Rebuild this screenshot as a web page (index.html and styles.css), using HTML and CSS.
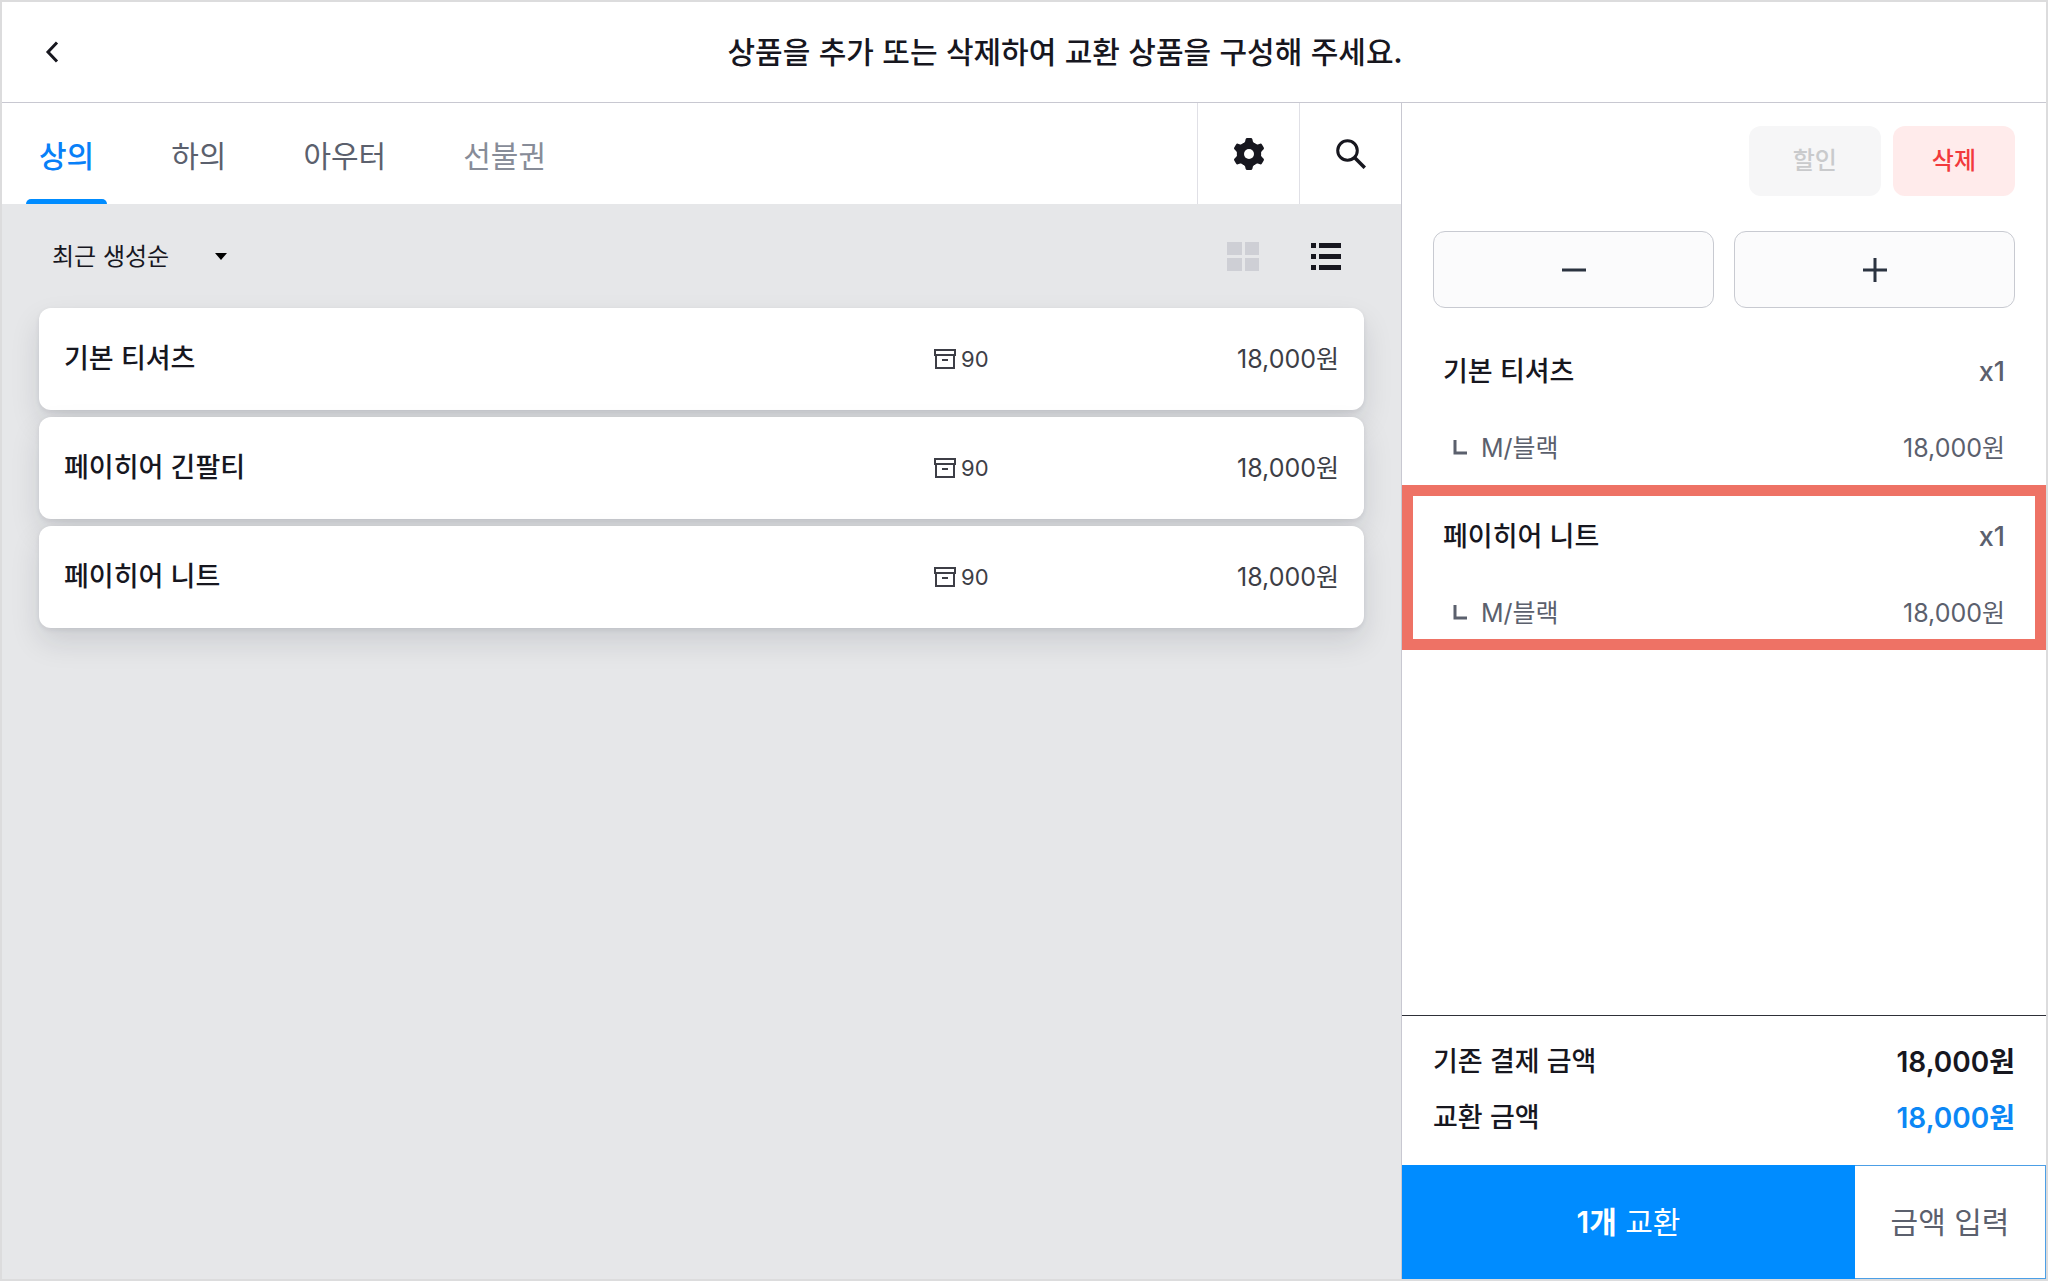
FILE: index.html
```html
<!DOCTYPE html>
<html lang="ko">
<head>
    <meta charset="UTF-8">
    <meta name="viewport" content="width=device-width, initial-scale=1.0">
    <title>상품 교환</title>
    <link rel="stylesheet" href="styles.css">
</head>
<body>
    <svg class="defs" aria-hidden="true">
        <symbol id="icon-box" viewBox="0 0 22 20">
            <path d="M1 1h20v5H1zM2 6v13h18V6M8 11h6" fill="none" stroke="currentColor" stroke-width="2"/>
        </symbol>
        <symbol id="icon-branch" viewBox="0 0 14 16">
            <path d="M2 0v13h12" fill="none" stroke="currentColor" stroke-width="3"/>
        </symbol>
        <path id="gear-tooth" d="M12.6 1.3Q12.9 0 14.2 0h3.6q1.3 0 1.6 1.3l.5 2.3q.6 1.6 2.4 2L16 16 9.700 5.600q1.800-.4 2.400-2z"/>
    </svg>

    <header class="header">
        <button class="back-btn" aria-label="뒤로">
            <svg width="14" height="22" viewBox="0 0 14 22"><path d="M12 1.500 3 11l9 9.500" fill="none" stroke="currentColor" stroke-width="3"/></svg>
        </button>
        <h1>상품을 추가 또는 삭제하여 교환 상품을 구성해 주세요.</h1>
    </header>

    <div class="content">
        <main class="products">
            <div class="toolbar">
                <nav class="tabs">
                    <a href="#top" class="tab active">상의</a>
                    <a href="#bottom" class="tab">하의</a>
                    <a href="#outer" class="tab">아우터</a>
                    <a href="#prepaid" class="tab light">선불권</a>
                </nav>
                <button class="tool-btn" aria-label="설정">
                    <svg width="32" height="32" viewBox="0 0 32 32" fill="currentColor">
                        <use href="#gear-tooth"/>
                        <use href="#gear-tooth" transform="rotate(60 16 16)"/>
                        <use href="#gear-tooth" transform="rotate(120 16 16)"/>
                        <use href="#gear-tooth" transform="rotate(180 16 16)"/>
                        <use href="#gear-tooth" transform="rotate(240 16 16)"/>
                        <use href="#gear-tooth" transform="rotate(300 16 16)"/>
                        <circle cx="16" cy="16" r="12"/>
                        <circle cx="16" cy="16" r="5" fill="#fff"/>
                    </svg>
                </button>
                <button class="tool-btn" aria-label="검색">
                    <svg width="30" height="30" viewBox="0 0 30 30" fill="none" stroke="currentColor" stroke-width="3">
                        <circle cx="11.500" cy="11.500" r="9.800"/>
                        <path d="M18.500 18.500 28.800 28.800" stroke-width="3.500"/>
                    </svg>
                </button>
            </div>

            <div class="options">
                <div class="sort">
                    <select aria-label="정렬">
                        <option>최근 생성순</option>
                        <option>이름순</option>
                    </select>
                    <svg class="caret" width="12" height="7" viewBox="0 0 12 7"><path d="M0 0h12L6 7z"/></svg>
                </div>
                <div class="views">
                    <button class="view-btn" aria-label="격자 보기">
                        <svg width="32" height="29" viewBox="0 0 32 29" fill="currentColor"><path d="M0 0h15v13H0zM18 0h14v13H18zM0 16h15v13H0zM18 16h14v13H18z"/></svg>
                    </button>
                    <button class="view-btn active" aria-label="목록 보기">
                        <svg width="30" height="28" viewBox="0 0 30 28" fill="currentColor"><path d="M0 0h5v5H0zM8 0h22v5H8zM0 11h5v5H0zM8 11h22v5H8zM0 22h5v5H0zM8 22h22v5H8z"/></svg>
                    </button>
                </div>
            </div>

            <ul class="product-list">
                <li>
                    <button class="product">
                        <span class="name">기본 티셔츠</span>
                        <span class="stock"><svg width="22" height="20"><use href="#icon-box"/></svg>90</span>
                        <span class="price">18,000원</span>
                    </button>
                </li>
                <li>
                    <button class="product">
                        <span class="name">페이히어 긴팔티</span>
                        <span class="stock"><svg width="22" height="20"><use href="#icon-box"/></svg>90</span>
                        <span class="price">18,000원</span>
                    </button>
                </li>
                <li>
                    <button class="product">
                        <span class="name">페이히어 니트</span>
                        <span class="stock"><svg width="22" height="20"><use href="#icon-box"/></svg>90</span>
                        <span class="price">18,000원</span>
                    </button>
                </li>
            </ul>
        </main>

        <aside class="cart">
            <div class="cart-actions">
                <button class="action" disabled>할인</button>
                <button class="action delete">삭제</button>
            </div>
            <div class="quantity">
                <button class="qty-btn" aria-label="수량 감소">
                    <svg width="24" height="24" viewBox="0 0 24 24"><path d="M0 12h24" stroke="currentColor" stroke-width="3"/></svg>
                </button>
                <button class="qty-btn" aria-label="수량 증가">
                    <svg width="24" height="24" viewBox="0 0 24 24"><path d="M0 12h24M12 0v24" stroke="currentColor" stroke-width="3"/></svg>
                </button>
            </div>

            <ul class="cart-list">
                <li class="cart-item">
                    <div class="cart-row">
                        <span class="name">기본 티셔츠</span>
                        <span class="count">x1</span>
                    </div>
                    <div class="cart-row option">
                        <span class="variant"><svg width="14" height="16"><use href="#icon-branch"/></svg>M/블랙</span>
                        <span class="price">18,000원</span>
                    </div>
                </li>
                <li class="cart-item selected">
                    <div class="cart-row">
                        <span class="name">페이히어 니트</span>
                        <span class="count">x1</span>
                    </div>
                    <div class="cart-row option">
                        <span class="variant"><svg width="14" height="16"><use href="#icon-branch"/></svg>M/블랙</span>
                        <span class="price">18,000원</span>
                    </div>
                </li>
            </ul>

            <dl class="totals">
                <div class="total">
                    <dt>기존 결제 금액</dt>
                    <dd>18,000원</dd>
                </div>
                <div class="total">
                    <dt>교환 금액</dt>
                    <dd class="blue">18,000원</dd>
                </div>
            </dl>
            <div class="footer">
                <button class="exchange-btn"><b>1개</b> 교환</button>
                <button class="amount-btn">금액 입력</button>
            </div>
        </aside>
    </div>
</body>
</html>
```
FILE: styles.css
```css
* {
    box-sizing: border-box;
}
body {
    margin: 0;
    min-height: 100vh;
    display: flex;
    flex-direction: column;
    border: 2px solid #dcdcdd;
    background-color: #fff;
    color: #17171f;
    font-family: Inter, "Noto Sans CJK KR", sans-serif;
    font-size: 27px;
    line-height: 40px;
}
button, select {
    margin: 0;
    padding: 0;
    border: none;
    background: none;
    color: inherit;
    font: inherit;
    cursor: pointer;
}
svg {
    display: block;
    flex-shrink: 0;
}
ul, dl, dd {
    margin: 0;
    padding: 0;
    list-style: none;
}
.defs {
    position: absolute;
    width: 0;
    height: 0;
}

/* header */
.header {
    display: flex;
    height: 101px;
    border-bottom: 1px solid #c8c8d1;
}
.back-btn {
    display: flex;
    width: 82px;
    align-items: center;
    padding-left: 43px;
}
h1 {
    flex: 1;
    margin: 0;
    padding-bottom: 4px;
    align-self: center;
    text-align: center;
    font-family: "Noto Sans CJK KR", sans-serif;
    font-size: 30px;
    font-weight: 500;
}
.content {
    flex: 1;
    display: flex;
}

/* products */
.products {
    flex: 1;
    background-color: #e6e7e9;
}
.toolbar {
    display: flex;
    height: 101px;
    background-color: #fff;
}
.tabs {
    flex: 1;
    display: flex;
    gap: 51px;
    padding-left: 24px;
}
.tab {
    display: flex;
    align-items: center;
    padding: 0 13px;
    border-top: 5px solid transparent;
    color: #5b606d;
    font-size: 30px;
    text-decoration: none;
}
.tab.light {
    color: #878c98;
}
.tab.active {
    position: relative;
    color: #0880f8;
    font-weight: 500;
}
.tab.active::after {
    content: "";
    position: absolute;
    left: 0;
    right: 0;
    bottom: 0;
    height: 5px;
    border-radius: 5px 5px 0 0;
    background-color: #008cff;
}
.tool-btn {
    display: flex;
    width: 102px;
    align-items: center;
    justify-content: center;
    padding-top: 1px;
    border-left: 1px solid #e0e0e6;
}
.options {
    display: flex;
    align-items: center;
    justify-content: space-between;
    height: 104px;
    padding: 1px 60px 0 50px;
}
.sort {
    display: flex;
    align-items: center;
}
.sort select {
    width: 175px;
    appearance: none;
    font-size: 24px;
}
.caret {
    margin-left: -12px;
    pointer-events: none;
}
.views {
    display: flex;
    gap: 52px;
}
.view-btn {
    color: #cecfd5;
}
.view-btn.active {
    color: #17171f;
}
.product-list {
    display: flex;
    flex-direction: column;
    gap: 7px;
    padding: 0 37px;
}
.name {
    font-weight: 500;
}
.product {
    display: grid;
    grid-template-columns: 1fr 150px 255px;
    align-items: center;
    width: 100%;
    height: 102px;
    padding: 0 25px;
    border-radius: 12px;
    background-color: #fff;
    box-shadow: 0 14px 30px rgba(20, 25, 45, 0.12), 0 2px 5px rgba(20, 25, 45, 0.08);
    text-align: left;
}
.product .stock {
    display: flex;
    align-items: center;
    gap: 5px;
    color: #3d3e46;
    font-size: 22px;
}
.product .price {
    color: #3d3e46;
    font-size: 25px;
    text-align: right;
}

/* cart */
.cart {
    display: flex;
    flex-direction: column;
    width: 645px;
    border-left: 1px solid #c8c8d1;
}
.cart-actions {
    display: flex;
    justify-content: flex-end;
    gap: 12px;
    padding: 23px 31px 35px;
}
.action {
    height: 70px;
    padding: 0 44px;
    border-radius: 12px;
    background-color: #f6f6f7;
    color: #c9cacc;
    font-size: 24px;
    font-weight: 500;
}
.action.delete {
    padding: 0 39px;
    background-color: #ffebeb;
    color: #f23a3c;
}
.quantity {
    display: flex;
    gap: 20px;
    padding: 0 31px;
}
.qty-btn {
    flex: 1;
    display: flex;
    align-items: center;
    justify-content: center;
    height: 77px;
    border: 1px solid #c8cad1;
    border-radius: 12px;
    background-color: #fbfbfc;
    color: #2b3340;
}
.cart-list {
    flex: 1;
    padding-top: 12px;
}
.cart-item {
    height: 165px;
    padding: 32px 41px 0;
}
.cart-item.selected {
    border: 11px solid #ee7265;
    padding: 21px 30px 0;
}
.cart-row {
    display: flex;
    justify-content: space-between;
}
.cart-row.option {
    margin-top: 36px;
    padding-left: 10px;
    color: #5b606d;
    font-size: 25px;
}
.count {
    color: #5b606d;
    font-weight: 500;
}
.variant {
    display: flex;
    align-items: center;
    gap: 14px;
}
.totals {
    display: flex;
    flex-direction: column;
    gap: 16px;
    padding: 26px 31px 27px;
    border-top: 1px solid #2e3038;
}
.total {
    display: flex;
    justify-content: space-between;
    font-weight: 500;
}
.total dd {
    font-size: 28px;
    font-weight: 600;
}
.total .blue {
    color: #0c87f5;
}
.footer {
    display: flex;
    height: 114px;
    font-size: 30px;
}
.exchange-btn {
    flex: 1;
    background-color: #008cff;
    color: #fff;
}
.exchange-btn b {
    font-weight: 600;
}
.amount-btn {
    width: 191px;
    border: 1px solid #4c9fe6;
    border-left: none;
    color: #5b606d;
}
```
